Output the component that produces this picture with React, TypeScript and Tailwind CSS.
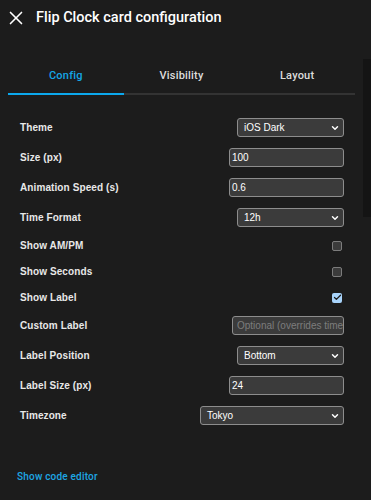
import { X, ChevronDown, Check } from "lucide-react";

type Row =
  | { label: string; kind: "select"; value: string; width: string }
  | { label: string; kind: "input"; value: string; placeholder?: boolean; width: string }
  | { label: string; kind: "check"; checked: boolean };

const rows: Row[] = [
  { label: "Theme", kind: "select", value: "iOS Dark", width: "w-[107px]" },
  { label: "Size (px)", kind: "input", value: "100", width: "w-[115px]" },
  { label: "Animation Speed (s)", kind: "input", value: "0.6", width: "w-[115px]" },
  { label: "Time Format", kind: "select", value: "12h", width: "w-[107px]" },
  { label: "Show AM/PM", kind: "check", checked: false },
  { label: "Show Seconds", kind: "check", checked: false },
  { label: "Show Label", kind: "check", checked: true },
  { label: "Custom Label", kind: "input", value: "Optional (overrides timezone)", placeholder: true, width: "w-[112px]" },
  { label: "Label Position", kind: "select", value: "Bottom", width: "w-[107px]" },
  { label: "Label Size (px)", kind: "input", value: "24", width: "w-[115px]" },
  { label: "Timezone", kind: "select", value: "Tokyo", width: "w-[144px]" },
];

function Field({ row }: { row: Row }) {
  if (row.kind === "check") {
    return (
      <div className="h-[15px] flex items-center pr-[2px]">
        {row.checked ? (
          <div className="w-[10px] h-[10px] rounded-[2px] bg-[#a8d4fb] flex items-center justify-center">
            <Check size={9} strokeWidth={3.5} className="text-[#1c1c1c]" />
          </div>
        ) : (
          <div className="w-[10px] h-[10px] rounded-[2px] border border-[#7c7c7c] bg-[#3b3b3b]" />
        )}
      </div>
    );
  }
  if (row.kind === "select") {
    return (
      <div
        className={`${row.width} h-[19px] rounded-[3px] border border-[#8d8d8d] bg-[#3b3b3b] flex items-center justify-between pl-[6px] pr-[3px] text-[10px] text-white font-['Liberation_Sans',sans-serif]`}
      >
        <span>{row.value}</span>
        <ChevronDown size={10} strokeWidth={3.5} className="text-white" />
      </div>
    );
  }
  return (
    <div
      className={`${row.width} h-[19px] rounded-[3px] border border-[#8d8d8d] bg-[#3b3b3b] flex items-center pl-[2px] text-[10px] font-['Liberation_Sans',sans-serif] whitespace-nowrap overflow-hidden ${
        row.placeholder ? "text-[#7d7d7d] pl-[4px]" : "text-white"
      }`}
    >
      {row.value}
    </div>
  );
}

export default function App() {
  return (
    <div className="w-[371px] h-[500px] bg-[#1c1c1c] font-['Roboto',sans-serif] relative overflow-hidden">
      <header className="h-[35px] flex items-center pl-[5px]">
        <X size={22} strokeWidth={1.8} className="text-white" />
        <h1 className="ml-[9px] text-[14.5px] font-medium text-white">Flip Clock card configuration</h1>
      </header>

      <div className="absolute right-0 top-[59px] w-[8px] h-[158px] bg-[#141414]" />

      <div className="pl-[8px] pr-[16px] pt-[34px]">
        <nav className="grid grid-cols-3 text-[11px] leading-[14px] font-medium tracking-[0.2px]">
          <div className="text-center text-[#14a6e6] pb-[10px] border-b-2 border-[#0ca8ed]">Config</div>
          <div className="text-center text-[#dcdcdc] pb-[10px] border-b-2 border-[#333333]">Visibility</div>
          <div className="text-center text-[#dcdcdc] pb-[10px] border-b-2 border-[#333333]">Layout</div>
        </nav>

        <div className="pl-[12px] pr-[11px] pt-[23px] flex flex-col gap-[11px]">
          {rows.map((row) => (
            <div
              key={row.label}
              className={`flex items-center justify-between ${row.kind === "check" ? "h-[15px]" : "h-[19px]"}`}
            >
              <span className="text-[10px] font-bold text-[#e8e8e8] tracking-[0.1px] font-['Liberation_Sans',sans-serif]">
                {row.label}
              </span>
              <Field row={row} />
            </div>
          ))}
        </div>

        <div className="pl-[9px] pt-[46px] text-[10px] leading-[12px] font-medium text-[#1ea7e4] tracking-[0.2px]">
          Show code editor
        </div>
      </div>
    </div>
  );
}
